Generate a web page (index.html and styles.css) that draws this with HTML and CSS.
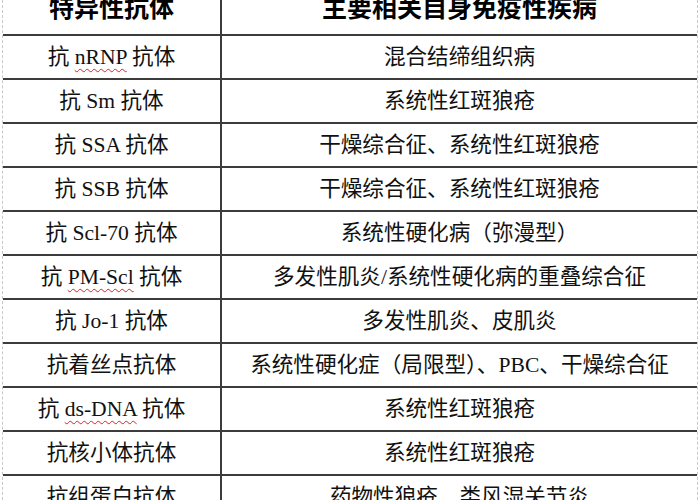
FILE: index.html
```html
<!DOCTYPE html>
<html lang="zh">
<head>
<meta charset="utf-8">
<link rel="stylesheet" href="styles.css">
</head>
<body>
<div class="page">
  <table class="grid">
    <colgroup><col class="c1"><col class="c2"></colgroup>
    <thead>
      <tr class="head"><th>特异性抗体</th><th>主要相关自身免疫性疾病</th></tr>
    </thead>
    <tbody>
      <tr><td>抗 <span class="sp">nRNP</span> 抗体</td><td>混合结缔组织病</td></tr>
      <tr><td>抗 Sm 抗体</td><td>系统性红斑狼疮</td></tr>
      <tr><td>抗 SSA 抗体</td><td>干燥综合征、系统性红斑狼疮</td></tr>
      <tr><td>抗 SSB 抗体</td><td>干燥综合征、系统性红斑狼疮</td></tr>
      <tr><td>抗 Scl-70 抗体</td><td>系统性硬化病（弥漫型）</td></tr>
      <tr><td>抗 <span class="sp">PM-Scl</span> 抗体</td><td>多发性肌炎/系统性硬化病的重叠综合征</td></tr>
      <tr><td>抗 Jo-1 抗体</td><td>多发性肌炎、皮肌炎</td></tr>
      <tr><td>抗着丝点抗体</td><td>系统性硬化症（局限型）、PBC、干燥综合征</td></tr>
      <tr><td>抗 <span class="sp">ds-DNA</span> 抗体</td><td>系统性红斑狼疮</td></tr>
      <tr><td>抗核小体抗体</td><td>系统性红斑狼疮</td></tr>
      <tr><td>抗组蛋白抗体</td><td>药物性狼疮、类风湿关节炎</td></tr>
    </tbody>
  </table>
</div>
</body>
</html>
```
FILE: styles.css
```css
html, body {
  margin: 0;
  padding: 0;
  background: #fff;
  overflow: hidden;
}
.page {
  margin-left: 2px;
  width: 694px;
  height: 520px;
  border-left: 1px dashed #c8c8c8;
  border-right: 1px dashed #c8c8c8;
  overflow: hidden;
}
.grid {
  border-collapse: collapse;
  width: 694px;
  table-layout: fixed;
  margin-top: -22px;
  font-family: "Liberation Serif", "Noto Sans CJK SC", serif;
  color: #111;
}
.c1 { width: 218px; }
.c2 { width: 476px; }
.grid th, .grid td {
  border-bottom: 2px solid #3c3c3c;
  padding: 0;
  text-align: center;
  vertical-align: middle;
}
.grid th:first-child, .grid td:first-child {
  border-right: 2px solid #3c3c3c;
}
.head th {
  height: 56px;
  font-size: 25px;
  font-weight: bold;
  font-family: "Noto Sans CJK SC", sans-serif;
  color: #000;
}
.grid td {
  height: 40px;
  padding-top: 2px;
  font-size: 21.6px;
  line-height: 1;
}
.sp {
  text-decoration: underline wavy #e02020;
  text-decoration-thickness: 1px;
  text-underline-offset: 4px;
}
```
